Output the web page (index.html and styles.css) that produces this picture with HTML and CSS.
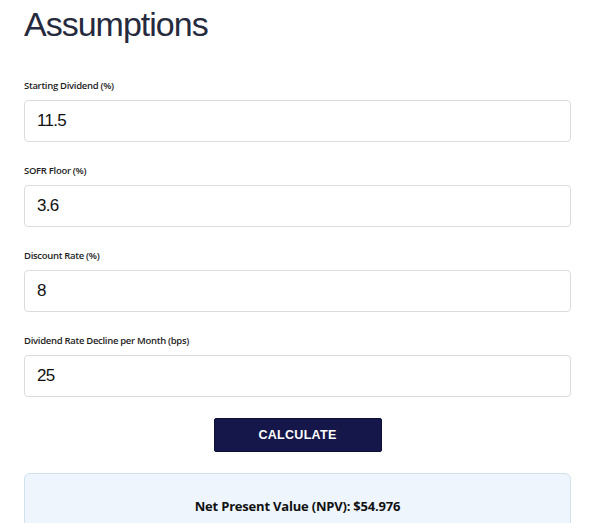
FILE: index.html
```html
<!DOCTYPE html>
<html>
<head>
    <title>Assumptions</title>
    <meta charset="UTF-8">
    <link rel="stylesheet" href="styles.css">
</head>
<body>

<div id="calc">
    <h1>Assumptions</h1>

    <div class="field">
        <label for="dividend">Starting Dividend (%)</label>
        <input id="dividend" type="text" value="11.5">
    </div>
    <div class="field">
        <label for="sofr">SOFR Floor (%)</label>
        <input id="sofr" type="text" value="3.6">
    </div>
    <div class="field">
        <label for="discount">Discount Rate (%)</label>
        <input id="discount" type="text" value="8">
    </div>
    <div class="field">
        <label for="decline">Dividend Rate Decline per Month (bps)</label>
        <input id="decline" type="text" value="25">
    </div>

    <div class="actions">
        <button id="calculate">CALCULATE</button>
    </div>

    <div id="result">Net Present Value (NPV): $54.976</div>
</div>

</body>
</html>
```

FILE: styles.css
```css
html {
    box-sizing: border-box;
}
*, *:before, *:after {
    box-sizing: inherit;
}

body{
    margin: 0;
    background-color: #ffffff;
    font-family: "Open Sans", Arial, sans-serif;
}

#calc{
    width: 547px;
    margin-left: 24px;
}

h1{
    font-family: "Liberation Sans", Arial, sans-serif;
    font-weight: 400;
    font-size: 34px;
    letter-spacing: -1px;
    color: #262a3d;
    margin: 4px 0 0 0;
    line-height: 40px;
}

.field{
    display: flex;
    flex-direction: column;
}

.field label{
    font-size: 9.5px;
    font-weight: 600;
    letter-spacing: -0.3px;
    color: #1e1e1e;
    height: 15px;
    line-height: 15px;
    margin: 34px 0 7px 0;
}

.field + .field label{
    margin-top: 21px;
}

.field input{
    height: 42px;
    border: 1px solid #dcdcdc;
    border-radius: 4px;
    padding: 0 12px;
    font-family: "Liberation Sans", Arial, sans-serif;
    font-size: 17px;
    letter-spacing: -0.7px;
    color: #111111;
    background-color: #ffffff;
    outline: none;
}

.actions{
    display: flex;
    justify-content: center;
    margin-top: 21px;
}

#calculate{
    width: 168px;
    height: 34px;
    border: 1px solid #0d0f33;
    border-radius: 2px;
    background-color: #15174a;
    color: #ffffff;
    font-family: "Liberation Sans", Arial, sans-serif;
    font-weight: 700;
    font-size: 12.5px;
    letter-spacing: 0.3px;
    cursor: pointer;
}

#result{
    margin-top: 21px;
    height: 70px;
    padding-top: 23px;
    background-color: #eef5fd;
    border: 1px solid #cfe2ec;
    border-radius: 6px;
    text-align: center;
    font-size: 13px;
    font-weight: 700;
    letter-spacing: -0.2px;
    color: #111111;
}
```
